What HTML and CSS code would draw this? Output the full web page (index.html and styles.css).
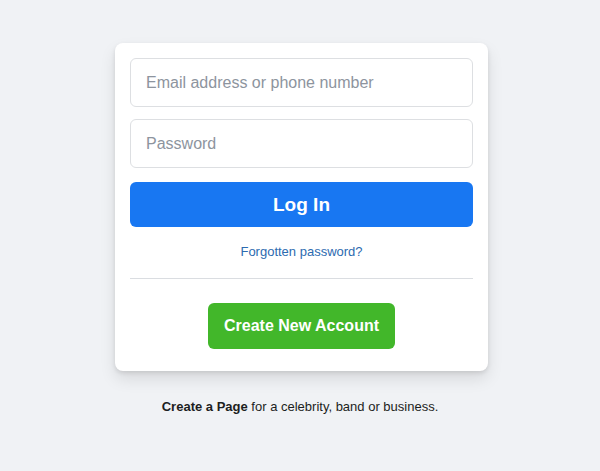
FILE: index.html
```html
<!DOCTYPE html>
<html>
<head>
<meta charset="utf-8">
<link rel="stylesheet" href="styles.css">
</head>
<body>
<div class="page">
  <form class="card">
    <input class="field" type="text" placeholder="Email address or phone number">
    <input class="field" type="password" placeholder="Password">
    <button class="login" type="button">Log In</button>
    <div class="forgot"><a href="#">Forgotten password?</a></div>
    <div class="divider"></div>
    <div class="create-wrap"><button class="create" type="button">Create New Account</button></div>
  </form>
  <p class="page-note"><b>Create a Page</b> for a celebrity, band or business.</p>
</div>
</body>
</html>
```

FILE: styles.css
```css
html, body {
  margin: 0;
  padding: 0;
  background: #f0f2f5;
  font-family: "Liberation Sans", Arial, Helvetica, sans-serif;
}
.page {
  display: flex;
  flex-direction: column;
  align-items: center;
  padding-top: 43px;
}
.card {
  width: 373px;
  box-sizing: border-box;
  background: #fff;
  border-radius: 8px;
  box-shadow: 0 2px 4px rgba(0,0,0,.1), 0 8px 16px rgba(0,0,0,.1);
  padding: 15px 15px 22px;
  display: flex;
  flex-direction: column;
  margin-left: 3px;
}
.field {
  height: 49px;
  box-sizing: border-box;
  border: 1px solid #dddfe2;
  border-radius: 6px;
  padding: 0 15px;
  font-family: inherit;
  font-size: 16px;
  color: #1d2129;
  margin: 0 0 12px;
  outline: none;
}
.field::placeholder { color: #8d949e; }
.login {
  margin-top: 2px;
  height: 45px;
  border: none;
  border-radius: 6px;
  background: #1877f2;
  color: #fff;
  font-family: inherit;
  font-size: 19px;
  font-weight: bold;
}
.forgot {
  text-align: center;
  margin-top: 17px;
  font-size: 13px;
  line-height: 16px;
}
.forgot a { text-decoration: none; color: #2d6bb0; }
.divider {
  border-top: 1px solid #dadde1;
  margin: 18px 0 24px;
}
.create-wrap {
  display: flex;
  justify-content: center;
}
.create {
  height: 46px;
  padding: 0 16px;
  border: none;
  border-radius: 6px;
  background: #42b72a;
  color: #fff;
  font-family: inherit;
  font-size: 16px;
  font-weight: bold;
}
.page-note {
  margin: 28px 0 0;
  font-size: 13px;
  color: #1c1e21;
}
```
